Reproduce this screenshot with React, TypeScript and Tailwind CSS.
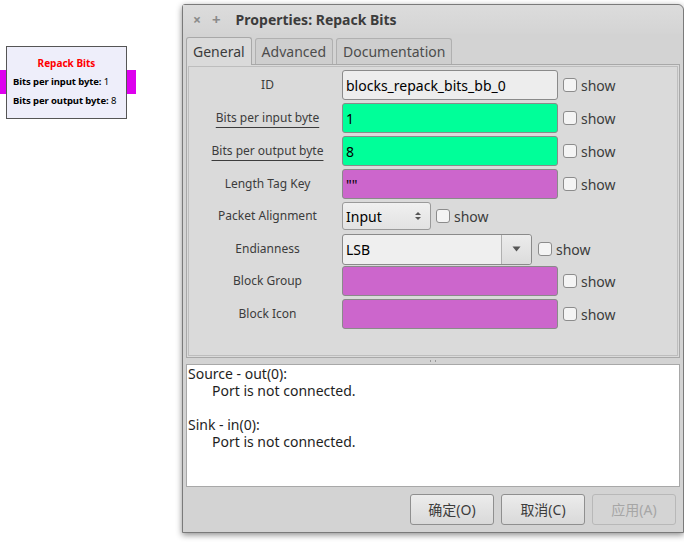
import React from 'react';

const font = { fontFamily: '"Noto Sans", "Open Sans", "Noto Sans CJK SC", sans-serif' };

const Check = () => (
  <span className="w-[14px] h-[14px] shrink-0 rounded-[3px] border border-[#8c8c8c] bg-[#f4f4f4]" />
);

const Row = ({ label, underline, tight, children }: any) => (
  <div className={`flex items-center h-[30px] ${tight ? 'mb-[2px]' : 'mb-[3px]'}`}>
    <div className="w-[149px] shrink-0 flex justify-center">
      <span className={`text-[12px] text-[#3c3c3c] ${underline ? 'underline underline-offset-[5px] decoration-[#3c3c3c]' : ''}`}>{label}</span>
    </div>
    {children}
  </div>
);

const Field = ({ bg, value, border = 'border-[#8a8a8a]' }: any) => (
  <>
    <div className={`w-[216px] h-[30px] rounded-[3px] border ${border} ${bg} flex items-center px-[3px] text-[14px] text-black`}>{value}</div>
    <div className="flex items-center gap-[4px] ml-[5px]">
      <Check />
      <span className="text-[14px] text-[#3c3c3c]">show</span>
    </div>
  </>
);

const Btn = ({ label, disabled }: any) => (
  <div className={`w-[84px] h-[31px] rounded-[3px] border ${disabled ? 'border-[#b8b8b8] text-[#a6a6a6] bg-[#d4d4d4]' : 'border-[#8f8f8f] text-[#3c3c3c] bg-gradient-to-b from-[#ececec] to-[#d9d9d9]'} flex items-center justify-center text-[14px]`}>
    {label}
  </div>
);

export default function App() {
  return (
    <div className="relative w-[684px] h-[542px] bg-white overflow-hidden" style={font}>
      {/* flowgraph block */}
      <div className="absolute left-0 top-[70px] w-[7px] h-[24px] bg-[#dd00ee]" />
      <div className="absolute left-[126px] top-[70px] w-[10px] h-[24px] bg-[#dd00ee]" />
      <div className="absolute left-[6px] top-[46px] w-[121px] h-[73px] border border-[#555] bg-[#eeeefa] flex flex-col items-center pt-[9px]">
        <div className="text-[10px] font-bold text-[#ff0000] leading-[14px]">Repack Bits</div>
        <div className="self-start pl-[6px] text-[9.5px] leading-[19px] text-black mt-[2px] tracking-[-0.1px]">
          <div><span className="font-bold">Bits per input byte:</span> 1</div>
          <div><span className="font-bold">Bits per output byte:</span> 8</div>
        </div>
      </div>

      {/* dialog window */}
      <div className="absolute left-[182px] top-[4px] w-[502px] h-[529px] rounded-tr-[6px] rounded-tl-[3px] border border-[#7a7a7a] bg-[#d3d3d3] shadow-[0_2px_6px_rgba(0,0,0,0.45)] flex flex-col">
        <div className="h-[29px] shrink-0 flex items-center bg-gradient-to-b from-[#dcdcdc] to-[#d4d4d4] rounded-tr-[6px]">
          <span className="ml-[10px] text-[14px] text-[#8a8a8a] font-bold">×</span>
          <span className="ml-[11px] text-[15px] text-[#8a8a8a] font-bold">+</span>
          <span className="ml-[15px] text-[14px] font-bold text-[#3c3c3c]">Properties: Repack Bits</span>
        </div>

        {/* tabs */}
        <div className="flex items-end h-[30px] ml-[3px] gap-[3px]">
          <div className="h-[28px] px-[6px] rounded-t-[3px] border border-b-0 border-[#a8a8a8] bg-[#dadada] flex items-center text-[14px] text-[#3c3c3c] relative top-[1px]">General</div>
          <div className="h-[26px] px-[6px] rounded-t-[3px] border border-b-0 border-[#b0b0b0] bg-[#cecece] flex items-center text-[14px] text-[#4c4c4c]">Advanced</div>
          <div className="h-[26px] px-[6px] rounded-t-[3px] border border-b-0 border-[#b0b0b0] bg-[#cecece] flex items-center text-[14px] text-[#4c4c4c]">Documentation</div>
        </div>

        {/* general panel */}
        <div className="mx-[3px] h-[294px] border border-[#a8a8a8] bg-[#dadada] p-[1px]">
          <div className="h-full border border-[#bdbdbd] pt-[3px] pl-[4px]">
            <Row label="ID"><Field bg="bg-[#ededed]" value="blocks_repack_bits_bb_0" /></Row>
            <Row label="Bits per input byte" underline><Field bg="bg-[#00ff99]" value="1" /></Row>
            <Row label="Bits per output byte" underline><Field bg="bg-[#00ff99]" value="8" /></Row>
            <Row label="Length Tag Key" tight><Field bg="bg-[#cc66cc]" value='""' /></Row>
            <Row label="Packet Alignment">
              <div className="w-[89px] h-[28px] rounded-[3px] border border-[#9a9a9a] bg-gradient-to-b from-[#f0f0f0] to-[#e2e2e2] flex items-center justify-between px-[3px] text-[14px] text-black">
                <span>Input</span>
                <svg width="8" height="12" viewBox="0 0 8 12" className="mr-[5px]">
                  <path d="M1 5 L4 2 L7 5 Z" fill="#555" />
                  <path d="M1 7 L4 10 L7 7 Z" fill="#555" />
                </svg>
              </div>
              <div className="flex items-center gap-[4px] ml-[5px]">
                <Check />
                <span className="text-[14px] text-[#3c3c3c]">show</span>
              </div>
            </Row>
            <Row label="Endianness" tight>
              <div className="w-[190px] h-[31px] rounded-[3px] border border-[#8a8a8a] bg-[#efefef] flex items-stretch text-[14px] text-black">
                <span className="flex-1 flex items-center px-[3px]">LSB</span>
                <span className="w-[30px] border-l border-[#b0b0b0] rounded-r-[3px] bg-gradient-to-b from-[#ececec] to-[#dcdcdc] flex items-center justify-center">
                  <svg width="9" height="6" viewBox="0 0 9 6"><path d="M0.5 0.5 L8.5 0.5 L4.5 5.5 Z" fill="#555" /></svg>
                </span>
              </div>
              <div className="flex items-center gap-[4px] ml-[6px]">
                <Check />
                <span className="text-[14px] text-[#3c3c3c]">show</span>
              </div>
            </Row>
            <Row label="Block Group"><Field bg="bg-[#cc66cc]" value="" /></Row>
            <Row label="Block Icon"><Field bg="bg-[#cc66cc]" value="" /></Row>
          </div>
        </div>

        {/* pane handle */}
        <div className="h-[6px] mx-[3px] flex items-center justify-center">
          <div className="w-[6px] h-[2px] border-x border-[#9a9a9a]" />
        </div>

        {/* ports text */}
        <div className="mx-[3px] h-[123px] border border-[#a8a8a8] bg-white px-[1px] pt-[0px] text-[14px] leading-[17px] text-[#1e1e1e]">
          <div>Source - out(0):</div>
          <div className="pl-[24px]">Port is not connected.</div>
          <div className="h-[17px]" />
          <div>Sink - in(0):</div>
          <div className="pl-[24px]">Port is not connected.</div>
        </div>

        {/* buttons */}
        <div className="flex justify-end gap-[7px] mt-[7px] mr-[7px]">
          <Btn label="确定(O)" />
          <Btn label="取消(C)" />
          <Btn label="应用(A)" disabled />
        </div>
      </div>
    </div>
  );
}
